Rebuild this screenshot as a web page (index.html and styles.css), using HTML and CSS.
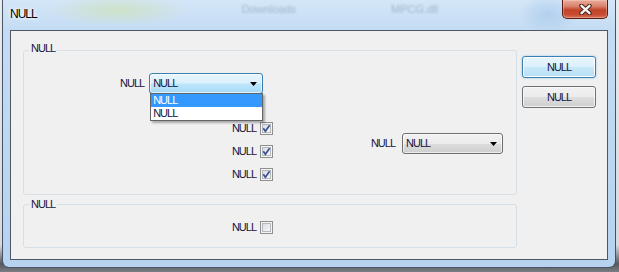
FILE: index.html
```html
<!DOCTYPE html>
<html>
<head>
	<meta charset="utf-8">
	<title>NULL</title>
	<link rel="stylesheet" href="styles.css">
</head>
<body>
	<div class="desktop">
		<div class="window">
			<div class="titlebar">
				<span class="title">NULL</span>
				<span class="ghost ghost-a">Downloads</span>
				<span class="ghost ghost-b">MPCG.dll</span>
				<button class="close">
					<svg width="13" height="11" viewBox="0 0 13 11">
						<path d="M2.5 1.8 L10.5 9.2 M10.5 1.8 L2.5 9.2" stroke="#4b2219" stroke-width="4.4" stroke-linecap="round"/>
						<path d="M2.5 1.8 L10.5 9.2 M10.5 1.8 L2.5 9.2" stroke="#f4f4f4" stroke-width="2.4" stroke-linecap="round"/>
					</svg>
				</button>
			</div>
			<div class="client">
				<div class="groups">
					<fieldset class="group g1">
						<legend>NULL</legend>
						<div class="row1">
							<span class="lbl">NULL</span>
							<div class="combo c1">
								<span class="value">NULL</span>
								<svg class="arrow" width="7" height="4" viewBox="0 0 7 4"><path d="M0 0 H7 L3.5 4 Z" fill="#000"/></svg>
								<ul class="list">
									<li class="sel">NULL</li>
									<li>NULL</li>
								</ul>
							</div>
						</div>
						<div class="row2">
							<div class="checks">
								<label class="check"><span class="lbl">NULL</span><span class="box"><svg width="11" height="11" viewBox="0 0 11 11"><path d="M2.3 5.3 L4.4 8.3 L8.6 2.2" fill="none" stroke="#3a5292" stroke-width="1.7"/></svg></span></label>
								<label class="check"><span class="lbl">NULL</span><span class="box"><svg width="11" height="11" viewBox="0 0 11 11"><path d="M2.3 5.3 L4.4 8.3 L8.6 2.2" fill="none" stroke="#3a5292" stroke-width="1.7"/></svg></span></label>
								<label class="check"><span class="lbl">NULL</span><span class="box"><svg width="11" height="11" viewBox="0 0 11 11"><path d="M2.3 5.3 L4.4 8.3 L8.6 2.2" fill="none" stroke="#3a5292" stroke-width="1.7"/></svg></span></label>
							</div>
							<div class="pair">
								<span class="lbl">NULL</span>
								<div class="combo c2">
									<span class="value">NULL</span>
									<svg class="arrow" width="7" height="4" viewBox="0 0 7 4"><path d="M0 0 H7 L3.5 4 Z" fill="#000"/></svg>
								</div>
							</div>
						</div>
					</fieldset>
					<fieldset class="group g2">
						<legend>NULL</legend>
						<div class="checks">
							<label class="check"><span class="lbl">NULL</span><span class="box"></span></label>
						</div>
					</fieldset>
				</div>
				<div class="buttons">
					<button class="btn default">NULL</button>
					<button class="btn">NULL</button>
				</div>
			</div>
		</div>
	</div>
</body>
</html>
```
FILE: styles.css
```css
body{
	margin:0;
}
.desktop{
	width:619px;
	height:272px;
	box-sizing:border-box;
	padding-left:2px;
	overflow:hidden;
	background:linear-gradient(to bottom, #e9ecee 0, #d6dadd 90%, #55595e 97%, #7a7e83 100%);
	font-family:"Liberation Sans", Arial, sans-serif;
	font-size:11px;
	color:#14143c;
}
.window{
	width:614px;
	height:268px;
	box-sizing:border-box;
	padding:0 7px 7px;
	border:1px solid rgba(30,40,55,.75);
	border-top:0;
	border-radius:0 0 7px 7px;
	display:flex;
	flex-direction:column;
	background:
		radial-gradient(ellipse 70px 16px at 115px 10px, rgba(205,225,170,.6), transparent),
		radial-gradient(ellipse 30px 20px at 545px 14px, rgba(150,190,230,.5), transparent),
		linear-gradient(to bottom, #d4e6f8 0, #c4dcf3 30px, #b6d2ef 100%);
}
.titlebar{
	height:30px;
	flex:none;
	display:flex;
	align-items:flex-start;
}
.title{
	margin-top:7px;
	font-size:12px;
	line-height:14px;
	letter-spacing:-1px;
	color:#000;
	text-shadow:0 0 5px #fff, 0 0 3px #fff;
}
.ghost{
	margin-top:3px;
	font-size:11px;
	color:rgba(40,60,90,.28);
	filter:blur(1px);
}
.ghost-a{
	margin-left:205px;
}
.ghost-b{
	margin-left:95px;
}
/* 关闭按钮 */
.close{
	margin-left:auto;
	width:46px;
	height:19px;
	padding:0;
	display:flex;
	align-items:center;
	justify-content:center;
	border:1px solid #5a1c12;
	border-top:0;
	border-radius:0 0 5px 5px;
	background:linear-gradient(to bottom, #e9ad9e 0, #d8826b 35%, #c2442a 55%, #c84b30 80%, #d9735a 100%);
	box-shadow:inset 0 0 0 1px rgba(255,220,210,.35);
}
.client{
	flex:1;
	display:flex;
	gap:5px;
	padding:12px 11px 0 12px;
	border:1px solid #4f5862;
	background:#f0f0f0;
}
.groups{
	width:494px;
	display:flex;
	flex-direction:column;
}
.group{
	margin:0;
	padding:0;
	border:1px solid #d5dfe5;
	border-radius:3px;
}
.group legend{
	margin-left:5px;
	padding:0 2px;
	line-height:11px;
	letter-spacing:-1px;
}
.g1{
	padding-bottom:8px;
}
.g1 legend{
	padding-bottom:3px;
}
.g2{
	margin-top:4px;
	padding-bottom:8px;
}
.g2 .checks{
	margin-top:6px;
}
.lbl{
	letter-spacing:-1px;
	line-height:13px;
}
.row1{
	display:flex;
	align-items:center;
	gap:5px;
	margin-top:16px;
	padding-left:96px;
}
.row2{
	display:flex;
	align-items:flex-start;
	margin-top:23px;
}
.combo{
	position:relative;
	box-sizing:border-box;
	height:21px;
	display:flex;
	align-items:center;
	padding:0 5px 0 3px;
	border:1px solid #707070;
	border-radius:3px;
	background:linear-gradient(to bottom, #f2f2f2 0, #ebebeb 50%, #dddddd 51%, #cfcfcf 100%);
	box-shadow:inset 0 0 0 1px rgba(255,255,255,.6);
}
.value{
	letter-spacing:-1px;
	line-height:13px;
}
.arrow{
	margin-left:auto;
}
.c1{
	width:114px;
	border-color:#3c7fb1;
	background:linear-gradient(to bottom, #eaf6fd 0, #d9f0fc 48%, #bee6fd 52%, #a7d9f5 100%);
}
.c2{
	width:101px;
}
/* 下拉列表 */
.list{
	position:absolute;
	left:0;
	top:19px;
	width:113px;
	box-sizing:border-box;
	margin:0;
	padding:0;
	list-style:none;
	border:1px solid #646464;
	background:#fff;
	box-shadow:2px 2px 2px rgba(0,0,0,.3);
	z-index:2;
}
.list li{
	height:13px;
	line-height:13px;
	padding-left:2px;
	letter-spacing:-1px;
}
.list .sel{
	background:#3399ff;
	color:#fff;
}
.checks{
	width:249px;
	display:flex;
	flex-direction:column;
}
.check{
	height:23px;
	display:flex;
	justify-content:flex-end;
	align-items:center;
	gap:4px;
}
.box{
	width:13px;
	height:13px;
	box-sizing:border-box;
	padding:0;
	display:flex;
	align-items:center;
	justify-content:center;
	border:1px solid #8e8f8f;
	background:linear-gradient(135deg, #d3d6da 0, #f1f2f3 70%, #fafafa 100%);
	box-shadow:inset 0 0 0 1px #f4f4f4, inset 0 0 0 2px #b5b9be;
}
.pair{
	display:flex;
	align-items:center;
	gap:7px;
	margin-left:auto;
	margin-right:13px;
	margin-top:16px;
}
.buttons{
	width:74px;
	margin-top:13px;
	display:flex;
	flex-direction:column;
	gap:8px;
}
.btn{
	height:22px;
	padding:0;
	font-family:"Liberation Sans", Arial, sans-serif;
	font-size:11px;
	letter-spacing:-1px;
	color:#14143c;
	border:1px solid #707070;
	border-radius:3px;
	background:linear-gradient(to bottom, #f2f2f2 0, #ebebeb 50%, #dddddd 51%, #cfcfcf 100%);
	box-shadow:inset 0 0 0 1px rgba(255,255,255,.7);
}
.btn.default{
	border-color:#3c7fb1;
	background:linear-gradient(to bottom, #e8f5fc 0, #dbf0fb 50%, #c9e8f8 51%, #b7dff4 100%);
	box-shadow:inset 0 0 0 1px #fff, 0 0 2px rgba(60,160,230,.6);
}
```
